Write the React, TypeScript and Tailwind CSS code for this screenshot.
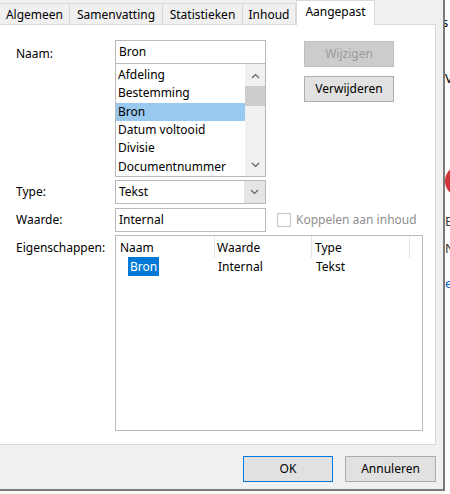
import React from 'react';

const font = { fontFamily: '"Noto Sans", "Open Sans", sans-serif' };

const Tab = ({ label, w, active }: { label: string; w: string; active?: boolean }) =>
  active ? (
    <div className={`${w} h-[25px] -mb-px relative z-10 bg-white border border-b-0 border-[#d9d9d9] flex items-center justify-center pb-[2px]`}>
      {label}
    </div>
  ) : (
    <div className={`${w} h-[21px] bg-[#f0f0f0] border-t border-r border-[#d9d9d9] flex items-center justify-center pt-[2px]`}>
      {label}
    </div>
  );

const Chevron = ({ up }: { up?: boolean }) => (
  <svg width="9" height="6" viewBox="0 0 9 6" className="block">
    <path d={up ? 'M1 5 L4.5 1.5 L8 5' : 'M1 1 L4.5 4.5 L8 1'} fill="none" stroke="#606060" strokeWidth="1.2" />
  </svg>
);

const items = ['Afdeling', 'Bestemming', 'Bron', 'Datum voltooid', 'Divisie', 'Documentnummer'];

const App: React.FC = () => {
  return (
    <div className="w-[450px] h-[494px] flex bg-[#f7f7f7] overflow-hidden text-[12px] text-black" style={font}>
      {/* dialog */}
      <div className="w-[445px] h-[491px] shrink-0 bg-[#f0f0f0] border-r-2 border-b-2 border-[#7a7a7a] flex flex-col">
        {/* tabs */}
        <div className="h-[24px] flex items-end shrink-0">
          <Tab label="Algemeen" w="w-[70px]" />
          <Tab label="Samenvatting" w="w-[93px]" />
          <Tab label="Statistieken" w="w-[80px]" />
          <Tab label="Inhoud" w="w-[53px]" />
          <Tab label="Aangepast" w="w-[79px]" active />
        </div>

        {/* panel */}
        <div className="w-[436px] h-[421px] shrink-0 bg-white border-t border-r border-b border-[#d9d9d9] pt-[15px]">
          {/* naam row */}
          <div className="flex">
            <div className="w-[115px] pl-[16px] pt-[5px]">Naam:</div>
            <div className="w-[151px]">
              <div className="h-[24px] border border-[#b9b9b9] px-[3px] flex items-center">Bron</div>
              <div className="h-[113px] border border-t-0 border-[#b9b9b9] flex">
                <div className="flex-1 pt-[2px]">
                  {items.map((it) => (
                    <div
                      key={it}
                      className={`h-[18.33px] flex items-center px-[2px] ${it === 'Bron' ? 'bg-[#99c9ef]' : ''}`}
                    >
                      {it}
                    </div>
                  ))}
                </div>
                <div className="w-[20px] bg-[#f0f0f0] flex flex-col items-center">
                  <div className="h-[22px] flex items-center justify-center pt-[2px]">
                    <Chevron up />
                  </div>
                  <div className="w-[20px] h-[20px] bg-[#cdcdcd]" />
                  <div className="flex-1" />
                  <div className="h-[22px] flex items-center justify-center">
                    <Chevron />
                  </div>
                </div>
              </div>
            </div>
            <div className="ml-[38px] mt-[1px] flex flex-col gap-[9px]">
              <div className="w-[90px] h-[26px] bg-[#cccccc] border border-[#bfbfbf] text-[#9a9a9a] flex items-center justify-center">
                Wijzigen
              </div>
              <div className="w-[90px] h-[26px] bg-[#e1e1e1] border border-[#adadad] flex items-center justify-center">
                Verwijderen
              </div>
            </div>
          </div>

          {/* type row */}
          <div className="flex mt-[3px] items-center">
            <div className="w-[115px] pl-[16px]">Type:</div>
            <div className="w-[151px] h-[24px] border border-[#b9b9b9] flex">
              <div className="flex-1 px-[3px] flex items-center">Tekst</div>
              <div className="w-[21px] bg-[#e5e5e5] flex items-center justify-center">
                <Chevron />
              </div>
            </div>
          </div>

          {/* waarde row */}
          <div className="flex mt-[4px] items-center">
            <div className="w-[115px] pl-[16px]">Waarde:</div>
            <div className="w-[151px] h-[24px] border border-[#b9b9b9] px-[3px] flex items-center">Internal</div>
            <div className="ml-[11px] w-[14px] h-[14px] border border-[#c4c4c4] bg-white" />
            <div className="ml-[5px] text-[#8f8f8f]">Koppelen aan inhoud</div>
          </div>

          {/* eigenschappen row */}
          <div className="flex mt-[3px]">
            <div className="w-[115px] pl-[16px] pt-[4px]">Eigenschappen:</div>
            <div className="w-[308px] h-[196px] border border-[#b9b9b9]">
              <div className="h-[22px] flex">
                <div className="w-[99px] pl-[4px] pt-[2px] border-r border-[#e5e5e5] flex items-center">Naam</div>
                <div className="w-[97px] pl-[2px] pt-[2px] border-r border-[#e5e5e5] flex items-center">Waarde</div>
                <div className="w-[98px] pl-[3px] pt-[2px] border-r border-[#e5e5e5] flex items-center">Type</div>
              </div>
              <div className="h-[18px] flex items-center">
                <div className="w-[100px] pl-[12px]">
                  <span className="bg-[#0078d7] text-white px-[2px] py-[1px]">Bron</span>
                </div>
                <div className="w-[98px] pl-[2px]">Internal</div>
                <div className="w-[98px] pl-[2px]">Tekst</div>
              </div>
            </div>
          </div>
        </div>

        {/* bottom buttons */}
        <div className="flex justify-end gap-[12px] pr-[7px] pt-[11px]">
          <div className="w-[90px] h-[26px] bg-[#e1e1e1] border border-[#0078d7] flex items-center justify-center">OK</div>
          <div className="w-[91px] h-[26px] bg-[#e1e1e1] border border-[#adadad] flex items-center justify-center">
            Annuleren
          </div>
        </div>
      </div>

      {/* page behind the dialog */}
      <div className="w-[5px] h-[494px] bg-white overflow-hidden flex flex-col text-[13px]">
        <div className="mt-[16px] -ml-[3px] leading-none">s</div>
        <div className="mt-[43px] leading-none">V</div>
        <div className="mt-[80px] w-[32px] h-[32px] rounded-full bg-[#d13438]" />
        <div className="mt-[18px] leading-none text-[#333]">E</div>
        <div className="mt-[14px] leading-none text-[#333]">N</div>
        <div className="mt-[22px] leading-none text-[#0066b4]">e</div>
      </div>
    </div>
  );
};

export default App;
